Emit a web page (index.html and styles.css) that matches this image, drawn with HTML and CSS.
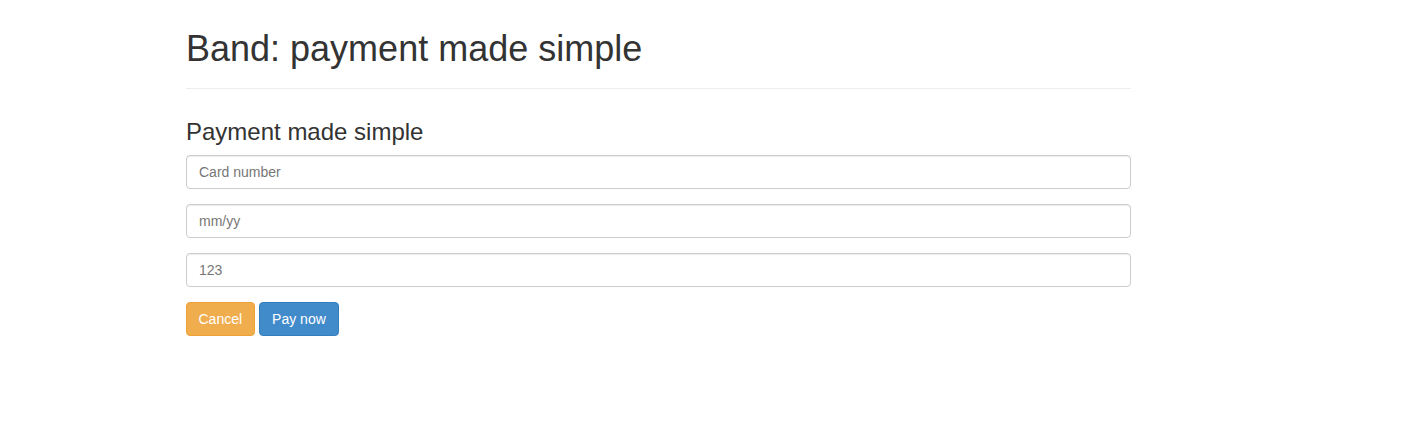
FILE: index.html
```html
<!DOCTYPE html>
<html>
<head>
<meta charset="utf-8">
<title>Band</title>
<link rel="stylesheet" href="styles.css">
</head>
<body>
<div class="container">
  <div class="page-header">
    <h1 class="title">Band: payment made simple</h1>
  </div>
  <h3 class="subtitle">Payment made simple</h3>
  <form class="form">
    <div class="form-group"><input class="form-control" type="text" placeholder="Card number"></div>
    <div class="form-group"><input class="form-control" type="text" placeholder="mm/yy"></div>
    <div class="form-group"><input class="form-control" type="text" placeholder="123"></div>
    <div class="actions">
      <button type="button" class="btn btn-warning">Cancel</button>
      <button type="button" class="btn btn-primary">Pay now</button>
    </div>
  </form>
</div>
</body>
</html>
```

FILE: styles.css
```css
* { box-sizing: border-box; }
html, body { margin: 0; padding: 0; background: #fff; }
body {
  font-family: "Liberation Sans", Arial, sans-serif;
  font-size: 14px;
  line-height: 1.42857;
  color: #333;
}
.container {
  width: 945px;
  margin-left: 186px;
}
.page-header {
  margin: 29px 0 20px;
  padding-bottom: 9px;
  border-bottom: 1px solid #eee;
}
.title {
  margin: 0 0 10px;
  font-size: 36px;
  font-weight: 500;
  line-height: 1.1;
}
.subtitle {
  margin: 30px 0 10px;
  font-size: 24px;
  font-weight: 500;
  line-height: 1.1;
}
.form-group { margin-bottom: 15px; }
.form-control {
  display: block;
  width: 100%;
  height: 34px;
  padding: 6px 12px;
  font-family: inherit;
  font-size: 14px;
  line-height: 1.42857;
  color: #555;
  background: #fff;
  border: 1px solid #ccc;
  border-radius: 4px;
  box-shadow: inset 0 1px 1px rgba(0,0,0,.075);
  outline: none;
}
.form-control::placeholder { color: #777; opacity: 1; }
.actions { display: flex; gap: 4px; }
.btn {
  display: inline-block;
  height: 34px;
  padding: 7px 12px 5px;
  font-family: inherit;
  font-size: 14px;
  line-height: 1.42857;
  color: #fff;
  border: 1px solid transparent;
  border-radius: 4px;
  cursor: pointer;
}
.btn-warning { background: #f0ad4e; border-color: #eea236; padding-left: 11.5px; padding-right: 11.5px; }
.btn-primary { background: #428bca; border-color: #357ebd; padding-left: 12.5px; padding-right: 12.5px; }
```
